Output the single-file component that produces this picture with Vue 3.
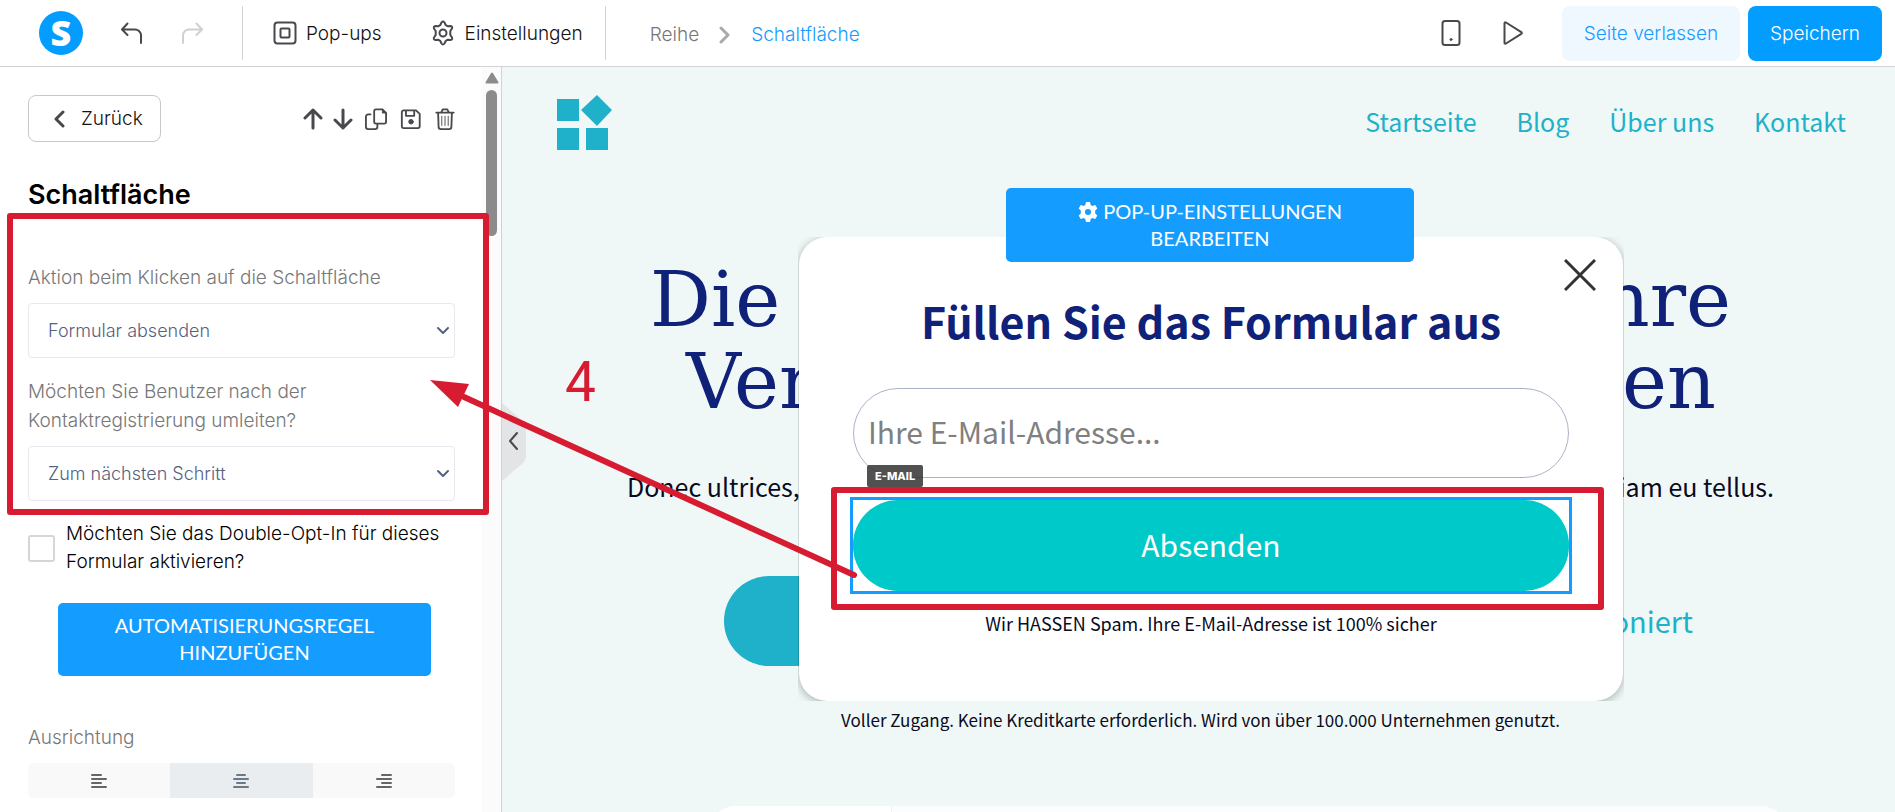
<script setup>
import { ref } from 'vue'

const action = ref('Formular absenden')
const redirect = ref('Zum nächsten Schritt')
const doubleOptIn = ref(false)
const email = ref('')
const align = ref('center')

const navLinks = ['Startseite', 'Blog', 'Über uns', 'Kontakt']

// lines of the three alignment icons: [x1, x2] per row
const alignments = [
  { name: 'left', label: 'Links', lines: [[1, 10], [1, 15], [1, 10], [1, 15]] },
  { name: 'center', label: 'Zentriert', lines: [[4, 12], [1, 15], [4, 12], [1, 15]] },
  { name: 'right', label: 'Rechts', lines: [[6, 15], [1, 15], [6, 15], [1, 15]] }
]
</script>

<template>
  <div class="editor">
    <header class="topbar">
      <a href="#" class="brand" aria-label="Startseite">S</a>
      <button class="icon-btn undo" aria-label="Rückgängig">
        <svg width="24" height="24" viewBox="0 0 24 24"><path d="M7.5 2.5 2 8.500l5.500 5.500M2.500 8.500H15a6 6 0 0 1 6 6V22" /></svg>
      </button>
      <button class="icon-btn redo" aria-label="Wiederholen" disabled>
        <svg width="24" height="24" viewBox="0 0 24 24"><path d="M16.500 2.500 22 8.500l-5.500 5.500M21.500 8.500H9a6 6 0 0 0-6 6V22" /></svg>
      </button>
      <div class="tools">
        <button class="tool">
          <svg width="24" height="24" viewBox="0 0 24 24"><rect x="1.500" y="1.500" width="21" height="21" rx="3" /><rect x="7.500" y="7.500" width="9" height="9" rx="1" /></svg>
          Pop-ups
        </button>
        <button class="tool">
          <svg width="26" height="26" viewBox="0 0 26 26">
            <path d="M11.500 2.500q1.500-2 3 0l1.300 2.700 1.700 1 3-.3q2.300.3 1.500 2.600L20.300 11v4l1.700 2.500q.8 2.300-1.500 2.600l-3-.3-1.700 1-1.300 2.700q-1.500 2-3 0l-1.300-2.700-1.700-1-3 .3Q3.200 19.800 4 17.500L5.700 15v-4L4 8.500q-.8-2.300 1.500-2.600l3 .3 1.700-1z" />
            <circle cx="13" cy="13" r="3.500" />
          </svg>
          Einstellungen
        </button>
      </div>
      <nav class="crumbs">
        <a href="#" class="crumb">Reihe</a>
        <svg width="12" height="18" viewBox="0 0 12 18"><path d="m2 2 7 7-7 7" /></svg>
        <a href="#" class="crumb current">Schaltfläche</a>
      </nav>
      <button class="icon-btn phone" aria-label="Mobile Ansicht">
        <svg width="22" height="28" viewBox="0 0 22 28"><rect x="2.500" y="2" width="17" height="24" rx="2.500" /><circle cx="11" cy="20.500" r="1" class="dot" /></svg>
      </button>
      <button class="icon-btn play" aria-label="Vorschau">
        <svg width="22" height="26" viewBox="0 0 22 26"><path d="M2.500 3.300v19.400c0 1 .8 1.300 1.500.8l15.300-9.700c.7-.5.7-1.200 0-1.700L4 2.500c-.7-.5-1.500-.2-1.500.8z" /></svg>
      </button>
      <button class="btn leave">Seite verlassen</button>
      <button class="btn save">Speichern</button>
    </header>

    <div class="workspace">
      <aside class="sidebar">
        <div class="panel">
          <div class="panel-head">
            <button class="back">
              <svg width="12" height="18" viewBox="0 0 12 18"><path d="M10 2 3 9l7 7" /></svg>
              Zurück
            </button>
            <div class="actions">
              <button aria-label="Nach oben">
                <svg width="20" height="22" viewBox="0 0 20 22" class="bold"><path d="M10 20V2M2 10l8-8 8 8" /></svg>
              </button>
              <button aria-label="Nach unten">
                <svg width="20" height="22" viewBox="0 0 20 22" class="bold"><path d="M10 2v18M2 12l8 8 8-8" /></svg>
              </button>
              <button aria-label="Duplizieren">
                <svg width="26" height="24" viewBox="0 0 26 24">
                  <path d="M7 7H4.500A2.500 2.500 0 0 0 2 9.500v11A2.500 2.500 0 0 0 4.500 23H12a2.500 2.500 0 0 0 2.500-2.500V18" />
                  <path d="M13 1.500h7l4 4V15a2 2 0 0 1-2 2h-9a2 2 0 0 1-2-2V3.500a2 2 0 0 1 2-2z" />
                  <path d="M20 1.500v4h4z" class="fill" />
                </svg>
              </button>
              <button aria-label="Block speichern">
                <svg width="24" height="24" viewBox="0 0 24 24">
                  <path d="M4 2.500h13.500l4 4V20a2 2 0 0 1-2 2H4a2 2 0 0 1-2-2V4.500a2 2 0 0 1 2-2zM6.500 3v5.500h9V3" />
                  <circle cx="12" cy="15" r="2.500" class="fill" />
                </svg>
              </button>
              <button aria-label="Löschen">
                <svg width="24" height="24" viewBox="0 0 24 24">
                  <path d="M2.500 5h19M8 4.500 9.500 1.500h5L16 4.500M4.500 5.500 5 20.500A2.500 2.500 0 0 0 7.500 23h9a2.500 2.500 0 0 0 2.500-2.500l.5-15" />
                  <path d="M8.500 9v10M12 9v10M15.500 9v10" class="thin" />
                </svg>
              </button>
            </div>
          </div>

          <h2>Schaltfläche</h2>

          <div class="group">
            <label class="label" for="action">Aktion beim Klicken auf die Schaltfläche</label>
            <div class="select">
              <select id="action" v-model="action">
                <option>Formular absenden</option>
                <option>URL öffnen</option>
              </select>
              <svg width="14" height="10" viewBox="0 0 14 10"><path d="m2 2 5 5 5-5" /></svg>
            </div>
            <label class="label second" for="redirect">Möchten Sie Benutzer nach der Kontaktregistrierung umleiten?</label>
            <div class="select">
              <select id="redirect" v-model="redirect">
                <option>Zum nächsten Schritt</option>
                <option>Benutzerdefinierte URL</option>
              </select>
              <svg width="14" height="10" viewBox="0 0 14 10"><path d="m2 2 5 5 5-5" /></svg>
            </div>
            <div class="marker"></div>
          </div>

          <div class="check">
            <input id="optin" v-model="doubleOptIn" type="checkbox">
            <label for="optin">Möchten Sie das Double-Opt-In für dieses Formular aktivieren?</label>
          </div>

          <button class="blue-btn rule">Automatisierungsregel hinzufügen</button>

          <div class="label align-label">Ausrichtung</div>
          <div class="segments">
            <button v-for="item in alignments" :key="item.name" :class="{ active: align === item.name }" :aria-label="item.label" @click="align = item.name">
              <svg width="16" height="18" viewBox="0 0 16 18">
                <path v-for="(line, i) in item.lines" :key="i" :d="`M${line[0]} ${i * 4 + 3}H${line[1]}`" />
              </svg>
            </button>
          </div>
        </div>
        <div class="scrollbar">
          <svg width="14" height="12" viewBox="0 0 14 12"><path d="M7 1.500 12.500 10.500H1.500z" /></svg>
          <div class="thumb"></div>
        </div>
      </aside>

      <main class="preview">
        <div class="site-head">
          <svg class="site-logo" width="56" height="55" viewBox="0 0 56 55">
            <path d="M0 4h22v22H0zM0 33h22v22H0zM29 33h22v22H29zM40 0l15 15-15 16-16-16z" />
          </svg>
          <nav class="site-nav">
            <a v-for="link in navLinks" :key="link" href="#">{{ link }}</a>
          </nav>
        </div>
        <h1 class="headline">
          <span class="line one"><span>Die</span><span>Ihre</span></span>
          <span class="line two"><span>Ver</span><span>en</span></span>
        </h1>
        <p class="lead"><span>Donec ultrices,</span><span>diam eu tellus.</span></p>
        <div class="cta">
          <button class="pill" aria-label="Jetzt starten"></button>
          <a href="#">funktioniert</a>
        </div>
        <p class="note">Voller Zugang. Keine Kreditkarte erforderlich. Wird von über 100.000 Unternehmen genutzt.</p>
        <div class="card"><div class="card-side"></div></div>

        <div class="popup-clip">
          <form class="popup" @submit.prevent>
            <button type="button" class="close" aria-label="Schließen">
              <svg width="32" height="32" viewBox="0 0 32 32"><path d="m1 1 30 30M31 1 1 31" /></svg>
            </button>
            <h3>Füllen Sie das Formular aus</h3>
            <div class="field">
              <input v-model="email" type="email" placeholder="Ihre E-Mail-Adresse..." aria-label="E-Mail-Adresse">
              <span class="tag">E-MAIL</span>
            </div>
            <div class="selected">
              <button class="submit">Absenden</button>
              <div class="marker"></div>
            </div>
            <p class="spam">Wir HASSEN Spam. Ihre E-Mail-Adresse ist 100% sicher</p>
          </form>
        </div>
        <button class="blue-btn popup-settings">
          <svg width="20" height="20" viewBox="0 0 20 20">
            <path fill-rule="evenodd" d="M8 0h4l.7 2.900 1.800 1 2.800-.9 2 3.500-2.100 2v2.900l2.100 2-2 3.500-2.800-.8-1.800 1L12 20H8l-.7-2.900-1.800-1-2.800.8-2-3.500 2.100-2V8.500l-2.100-2 2-3.500 2.800.9 1.800-1zM10 7a3 3 0 1 0 0 6 3 3 0 0 0 0-6z" />
          </svg>
          Pop-up-Einstellungen bearbeiten
        </button>
        <button class="collapse" aria-label="Seitenleiste einklappen">
          <svg width="24" height="78" viewBox="0 0 24 78">
            <path d="M0 0 21 18q3 3 3 7v27q0 5-3 8L0 78z" class="tab" />
            <path d="m15 30-7 8 7 8" class="arrow" />
          </svg>
        </button>
      </main>
    </div>

    <!-- step marker: arrow from the form button to its settings -->
    <svg class="pointer" width="430" height="204" viewBox="0 0 430 204">
      <path d="M34 17 424 195" class="shaft" />
      <path d="M0 0 39 4 28 27z" class="tip" />
    </svg>
    <div class="step">4</div>
  </div>
</template>

<style>
body {
  margin: 0;
}
</style>

<style scoped>
* {
  box-sizing: border-box;
}
.editor {
  position: relative;
  display: flex;
  flex-direction: column;
  height: 100vh;
  overflow: hidden;
  font-family: Inter, sans-serif;
  font-weight: 300;
  font-size: 19px;
  color: #111;
  background: #fff;
}
button {
  font: inherit;
  color: inherit;
  padding: 0;
  border: none;
  background: none;
  cursor: pointer;
}
a {
  text-decoration: none;
}
p, h1, h2, h3 {
  margin: 0;
}
svg {
  display: block;
  fill: none;
  stroke: #47494d;
  stroke-width: 2;
  stroke-linecap: round;
  stroke-linejoin: round;
}
.topbar {
  flex: none;
  display: flex;
  align-items: center;
  height: 67px;
  padding: 0 13px 0 39px;
  border-bottom: 1px solid #cfd3d6;
}
.brand {
  width: 44px;
  height: 44px;
  border-radius: 50%;
  background: #039dff;
  color: #fff;
  font: 800 36px/44px "Open Sans", sans-serif;
  text-align: center;
}
.undo {
  margin-left: 37px;
}
.redo {
  margin-left: 36px;
  opacity: 0.25;
}
.tools {
  display: flex;
  align-items: center;
  gap: 48px;
  height: 54px;
  margin-left: 38px;
  padding: 0 22px 0 30px;
  border-left: 1px solid #cfd3d6;
  border-right: 1px solid #cfd3d6;
}
.tool {
  display: flex;
  align-items: center;
  gap: 9px;
}
.crumbs {
  display: flex;
  align-items: center;
  gap: 20px;
  margin-left: 44px;
  margin-right: auto;
  padding-top: 3px;
}
.crumbs svg {
  stroke: #aaa;
  stroke-width: 3;
}
.crumb {
  color: #777;
}
.crumb.current {
  color: #149cff;
}
.phone {
  margin-right: 40px;
}
.play {
  margin-right: 38px;
}
.dot {
  fill: #47494d;
  stroke-width: 1;
}
.btn {
  height: 55px;
  border-radius: 8px;
}
.leave {
  padding: 0 22px;
  color: #149cff;
  background: #eff7ff;
}
.save {
  margin-left: 8px;
  padding: 0 22px;
  color: #fff;
  background: #039dff;
}
.workspace {
  flex: 1;
  min-height: 0;
  display: flex;
}
.sidebar {
  flex: none;
  display: flex;
  width: 502px;
  border-right: 1px solid #cfd3d6;
}
.panel {
  flex: 1;
  padding: 28px 27px 0 28px;
}
.panel-head {
  display: flex;
  align-items: center;
  justify-content: space-between;
}
.back {
  display: flex;
  align-items: center;
  gap: 16px;
  height: 47px;
  padding: 0 17px 0 24px;
  border: 1px solid #c8c8c8;
  border-radius: 8px;
}
.actions {
  display: flex;
  align-items: center;
  gap: 10px;
  margin-right: -2px;
}
.actions svg {
  height: 22px;
}
.bold, .back svg {
  stroke-width: 3;
}
.thin {
  stroke-width: 1;
}
.fill {
  fill: #47494d;
  stroke-width: 1;
}
h2 {
  margin-top: 35px;
  font-size: 27px;
  font-weight: 600;
  line-height: 36px;
  color: #000;
}
.group {
  position: relative;
  margin-top: 50px;
}
.label {
  display: block;
  line-height: 29px;
  color: #777;
}
.second {
  margin-top: 19px;
  padding-right: 80px;
}
.select {
  position: relative;
  margin-top: 11px;
}
.select select {
  appearance: none;
  display: block;
  width: 100%;
  height: 55px;
  padding: 0 19px;
  border: 1px solid #e8e8ee;
  border-radius: 4px;
  background: #fff;
  font: inherit;
  font-size: 18px;
  color: #56617f;
}
.select svg {
  position: absolute;
  right: 5px;
  top: 23px;
  stroke: #56617f;
  pointer-events: none;
}
.marker {
  position: absolute;
  border: 6px solid #d71c32;
  border-radius: 3px;
  pointer-events: none;
}
.group .marker {
  inset: -50px -34px -14px -21px;
}
.check {
  display: flex;
  align-items: center;
  gap: 11px;
  margin-top: 19px;
  line-height: 28px;
  color: #000;
}
.check input {
  appearance: none;
  flex: none;
  width: 27px;
  height: 27px;
  margin: 0;
  border: 2px solid #d6d6d6;
  border-radius: 3px;
  background: #fff;
}
.blue-btn {
  border-radius: 5px;
  background: #149cff;
  color: #fff;
  font: 400 20px/27px Lato, sans-serif;
  text-transform: uppercase;
}
.rule {
  display: block;
  width: calc(100% - 54px);
  margin: 27px 24px 0 30px;
  padding: 9px 40px 10px;
}
.align-label {
  margin-top: 47px;
}
.segments {
  display: flex;
  margin-top: 11px;
  border-radius: 5px;
  overflow: hidden;
  background: #f9f9f9;
}
.segments button {
  flex: 1;
  display: flex;
  justify-content: center;
  align-items: center;
  height: 35px;
}
.segments svg {
  stroke: #666;
}
.segments .active {
  background: #e9edf0;
}
.segments .active svg {
  stroke: #6b7a89;
}
.scrollbar {
  flex: none;
  display: flex;
  flex-direction: column;
  align-items: center;
  width: 19px;
  padding-top: 5px;
  background: #fbfbfb;
}
.scrollbar svg {
  fill: #8b8b8b;
  stroke: #8b8b8b;
}
.thumb {
  width: 11px;
  height: 146px;
  margin-top: 6px;
  border-radius: 6px;
  background: #8b8b8b;
}
.preview {
  position: relative;
  flex: 1;
  min-width: 0;
  overflow: hidden;
  background: #eff8f7;
  font-family: "Noto Sans CJK SC", sans-serif;
  font-weight: 400;
  color: #0a0a1e;
}
.site-head {
  display: flex;
  align-items: center;
  justify-content: space-between;
  padding: 28px 49px 0 55px;
}
.site-logo {
  fill: #1eb1c9;
  stroke: none;
}
.site-nav {
  display: flex;
  gap: 40px;
  padding-bottom: 3px;
  font-size: 25px;
  line-height: 36px;
}
.site-nav a, .cta a {
  color: #1eb1c9;
}
.headline {
  margin-top: 109px;
  font: 400 76px/82px "DejaVu Serif", serif;
  color: #0f2178;
}
.line, .lead, .cta {
  display: flex;
  justify-content: space-between;
}
.one {
  padding: 0 164px 0 148px;
}
.two {
  padding: 0 179px 0 184px;
}
.lead {
  margin-top: 45px;
  padding: 0 121px 0 125px;
  font-size: 25px;
  line-height: 36px;
}
.cta {
  align-items: center;
  margin-top: 72px;
  padding: 0 202px 0 222px;
  font-size: 29px;
}
.cta a {
  padding-bottom: 3px;
}
.pill {
  width: 400px;
  height: 90px;
  border-radius: 45px;
  background: #1eb1c9;
}
.note {
  margin-top: 40px;
  padding-left: 4px;
  font-size: 17px;
  line-height: 28px;
  text-align: center;
}
.card {
  margin: 72px 106px 0 206px;
  height: 300px;
  border-radius: 28px;
  background: #fbfdfe;
  overflow: hidden;
}
.card-side {
  width: 184px;
  height: 100%;
  background: #fff;
  border-right: 1px solid #eff3f5;
}
.popup-clip {
  position: absolute;
  top: 170px;
  left: 296px;
  right: 271px;
  padding: 0 1px;
  overflow: hidden;
}
.popup {
  position: relative;
  padding: 53px 54px 64px;
  border-radius: 28px;
  background: #fff;
  box-shadow: 0 2px 10px rgba(0, 0, 0, 0.3);
}
.close {
  position: absolute;
  top: 22px;
  right: 27px;
}
.close svg {
  stroke: #333;
  stroke-width: 3;
  stroke-linecap: butt;
}
h3 {
  font-size: 43px;
  font-weight: 700;
  line-height: 60px;
  text-align: center;
  color: #0f2178;
}
.field {
  position: relative;
  margin-top: 38px;
}
.field input {
  display: block;
  width: 100%;
  height: 90px;
  padding: 0 14px 4px;
  border: 1px solid #aab4c8;
  border-radius: 45px;
  background: #fff;
  font: inherit;
  font-size: 30px;
}
.field input::placeholder {
  color: #808080;
}
.tag {
  position: absolute;
  left: 14px;
  top: 77px;
  padding: 0 8px;
  border-radius: 2px;
  background: rgba(51, 51, 51, 0.85);
  color: #fff;
  font: 800 11px/22px Inter, sans-serif;
}
.selected {
  position: relative;
  margin: 19px -3px 0;
  border: 3px solid #149cff;
}
.submit {
  display: block;
  width: 100%;
  height: 91px;
  padding-bottom: 4px;
  border-radius: 45px;
  background: #00c9c9;
  color: #fff;
  font-size: 30px;
}
.selected .marker {
  inset: -13px -35px -19px -22px;
}
.spam {
  margin-top: 15px;
  font-size: 18px;
  line-height: 28px;
  text-align: center;
}
.popup-settings {
  position: absolute;
  top: 121px;
  left: 504px;
  right: 481px;
  padding: 10px 60px;
}
.popup-settings svg {
  display: inline-block;
  vertical-align: -3px;
  fill: #fff;
  stroke: none;
}
.collapse {
  position: absolute;
  left: 0;
  top: 336px;
}
.tab {
  fill: #e3e4e6;
  stroke: none;
}
.pointer {
  position: absolute;
  left: 430px;
  top: 380px;
  pointer-events: none;
}
.shaft {
  stroke: #d71c32;
  stroke-width: 6;
}
.tip {
  fill: #d71c32;
  stroke: none;
}
.step {
  position: absolute;
  left: 565px;
  top: 350px;
  font: 400 55px/64px Roboto, sans-serif;
  color: #d71c32;
}
</style>
